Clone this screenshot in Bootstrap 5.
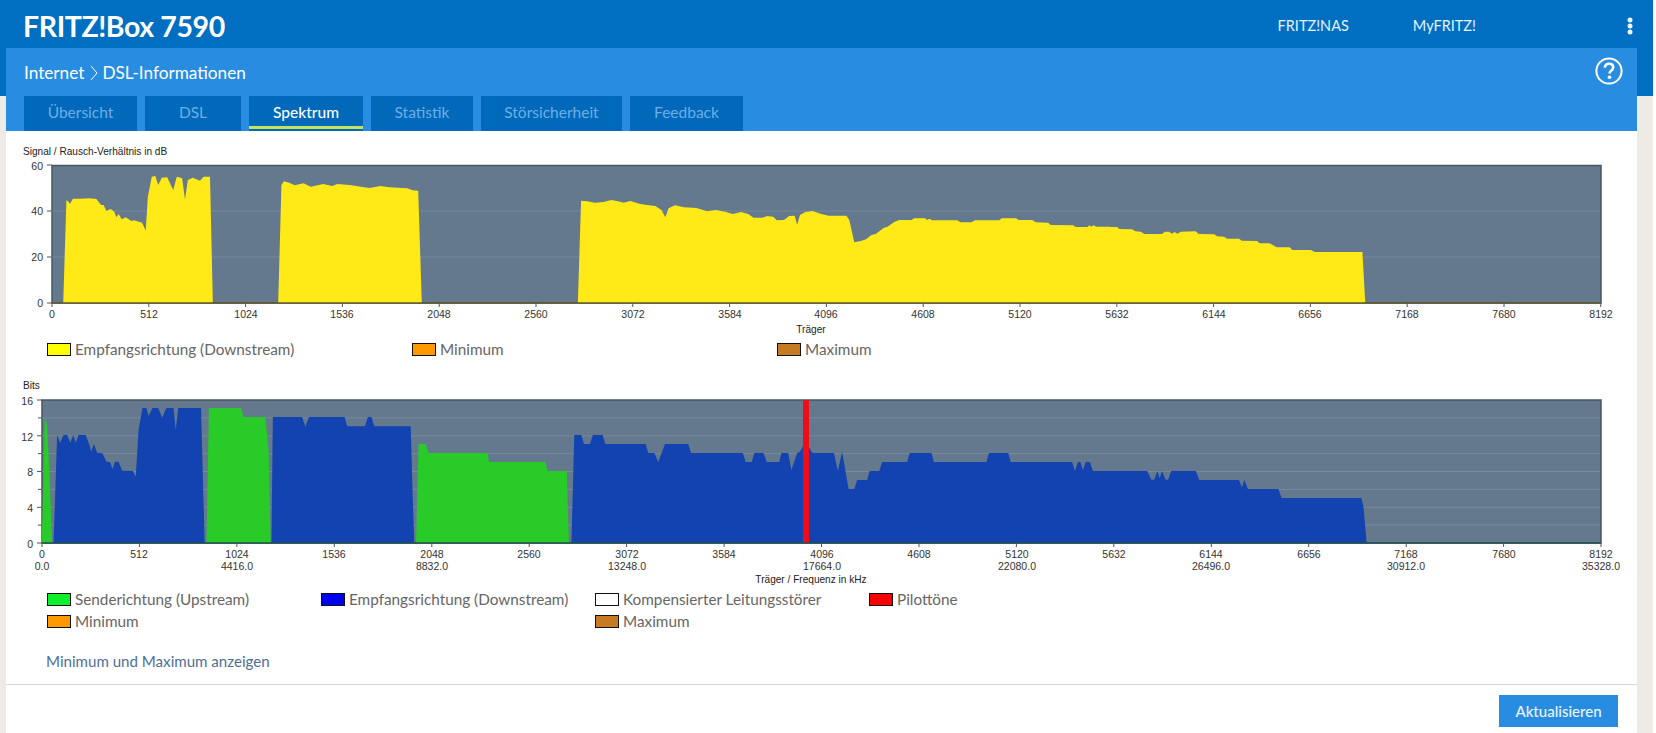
<!DOCTYPE html>
<html lang="de">
<head>
<meta charset="utf-8">
<title>FRITZ!Box 7590</title>
<link href="https://cdn.jsdelivr.net/npm/bootstrap@5.3.0/dist/css/bootstrap.min.css" rel="stylesheet">
<style>
html,body{margin:0;height:733px;overflow:hidden;background:#fff;}
body{font-family:"Lato","Liberation Sans",sans-serif;}
.fb-shell{width:1653px;height:733px;padding:0 16px 0 6px;background:linear-gradient(#006ec1 96px,#eeebe6 96px);}
.fb-top{height:48px;margin-left:-6px;margin-right:-16px;padding:4px 20px 0 23px;color:#eaf6ff;}
.fb-logo{font-size:28.5px;font-weight:700;letter-spacing:-.4px;color:#fff;line-height:1;}
.fb-toplink{font-size:14.5px;color:#e4f3ff;text-decoration:none;}
.fb-toplink-nas{margin-right:64px;}
.fb-toplink-my{margin-right:151px;}
.fb-panel{background:#fff;height:685px;}
.fb-head{background:#288ce0;height:83px;padding:0 0 0 18px;}
.fb-crumbrow{height:48px;padding-right:14px;}
.fb-crumb{font-size:17.2px;color:#fff;margin-top:2px;}
.fb-chevron{margin:0 4px 0 6px;}
.fb-help{margin-bottom:3px;}
.fb-tabs{display:grid;grid-template-columns:113px 96px 114px 102px 141px 113px;gap:8px;}
.fb-tab{height:35px;background:#0069ba;color:#6daee6;font-size:15.5px;text-align:center;line-height:33px;text-decoration:none;display:block;}
.fb-tab-on{color:#fff;box-shadow:inset 0 -2px 0 #0069ba,inset 0 -5px 0 #c6e35f;font-weight:500;}
.fb-chart{display:block;}
.fb-chart text{font-family:"Liberation Sans",sans-serif;font-size:10.5px;fill:#333;}
.fb-chart text.fb-cap{font-size:10.1px;fill:#222;}
.fb-grid{stroke:#778a9e;stroke-width:1;}
.fb-tick{stroke:#555;stroke-width:1;fill:none;}
.fb-frame{fill:#64798e;stroke:#49545f;stroke-width:1.5;}
.fb-legend{margin-left:41px;font-size:15.3px;color:#666;}
.fb-legend-a{width:1460px;height:26px;padding-top:2px;}
.fb-legend-b{width:1096px;}
.fb-item{height:22px;display:flex;align-items:center;}
.fb-swatch{width:24px;height:13px;border:1px solid #111;margin-right:4px;flex:none;}
.fb-c-yellow{background:#ffff00;}
.fb-c-min{background:#ff9900;}
.fb-c-max{background:#c67b22;}
.fb-c-green{background:#0cf02a;}
.fb-c-blue{background:#0000f0;}
.fb-c-white{background:#fff;}
.fb-c-red{background:#f80000;}
.fb-more{display:block;margin:18px 0 0 40px;height:22px;line-height:22px;font-size:15.1px;color:#4f6f97;text-decoration:none;}
.fb-foot{margin-top:12px;border-top:1px solid #d6d6d6;padding:10px 19px 0 0;}
.fb-btn{width:119px;height:32px;padding:0;border:0;border-radius:0;background:#288ce0;color:#e9f5ff;font-size:15px;font-weight:500;}
</style>
</head>
<body>
<div class="fb-shell">
  <header class="fb-top d-flex align-items-center">
    <div class="fb-logo flex-grow-1">FRITZ!Box 7590</div>
    <a class="fb-toplink fb-toplink-nas" href="#">FRITZ!NAS</a>
    <a class="fb-toplink fb-toplink-my" href="#">MyFRITZ!</a>
    <svg width="6" height="18" viewBox="0 0 6 18" aria-hidden="true"><circle cx="3" cy="3" r="2.5" fill="#eaf6ff"/><circle cx="3" cy="9" r="2.5" fill="#eaf6ff"/><circle cx="3" cy="15" r="2.5" fill="#eaf6ff"/></svg>
  </header>
  <main class="fb-panel">
    <div class="fb-head">
      <div class="fb-crumbrow d-flex align-items-center justify-content-between">
        <div class="fb-crumb d-flex align-items-center">Internet<svg class="fb-chevron" width="8" height="16" viewBox="0 0 8 16" aria-hidden="true"><path d="M1 1l6 7-6 7" fill="none" stroke="#fff" stroke-width="1"/></svg>DSL-Informationen</div>
        <svg class="fb-help" width="28" height="28" viewBox="0 0 28 28" aria-hidden="true"><circle cx="14" cy="14" r="12.6" fill="none" stroke="#fff" stroke-width="2"/><path d="M9.8 10.600c.3-2.600 2-3.900 4.300-3.900 2.500 0 4.100 1.500 4.100 3.500 0 1.700-.9 2.600-2.100 3.500-1.100.8-1.500 1.300-1.500 2.800" fill="none" stroke="#fff" stroke-width="2.600"/><circle cx="14.500" cy="20.300" r="1.800" fill="#fff"/></svg>
      </div>
      <nav class="fb-tabs">
        <a class="fb-tab" href="#">Übersicht</a>
        <a class="fb-tab" href="#">DSL</a>
        <a class="fb-tab fb-tab-on" href="#">Spektrum</a>
        <a class="fb-tab" href="#">Statistik</a>
        <a class="fb-tab" href="#">Störsicherheit</a>
        <a class="fb-tab" href="#">Feedback</a>
      </nav>
    </div>

    <svg class="fb-chart" width="1631" height="205" viewBox="6 131 1631 205" role="img" aria-label="Signal / Rausch-Verhältnis">
      <text class="fb-cap" x="23" y="155">Signal / Rausch-Verhältnis in dB</text>
      <rect class="fb-frame" x="52" y="165.500" width="1549" height="137.500"/>
      <path class="fb-grid" d="M52 211H1600M52 257H1600"/>
      <g fill="#ffe916">
        <g transform="translate(0,140) scale(.35714,.33333)">
          <polygon points="177,489 186,180 192,185 196,192 204,176 225,176 250,175 270,177 283,195 290,195 298,213 310,207 320,215 326,232 332,222 341,238 352,232 368,243 375,241 398,248 408,272 414,170 425,110 435,108 443,135 453,113 468,112 485,150 495,110 510,115 518,178 526,120 540,113 560,122 570,110 588,110 596,489"/>
          <polygon points="779,489 788,135 795,124 810,128 825,136 850,130 870,140 905,132 930,138 945,132 985,136 1010,140 1035,144 1065,138 1090,142 1140,145 1155,151 1171,152 1181,489"/>
        </g>
        <g transform="translate(550,140) scale(.35714,.33333)">
          <polygon points="78,489 87,182 105,184 125,188 150,186 172,180 190,184 207,188 225,183 250,191 270,195 295,198 312,210 323,232 332,205 350,196 375,202 410,204 440,214 465,210 490,215 512,222 535,216 555,222 570,233 595,233 608,228 625,230 635,241 655,240 670,228 685,227 692,254 700,225 715,216 735,213 760,222 780,227 830,227 838,240 852,307 870,303 885,298 900,285 912,282 935,263 945,260 965,245 978,240 1012,240 1020,235 1050,235 1056,240 1062,236 1070,241 1140,241 1150,247 1180,247 1190,241 1258,241 1265,235 1305,235 1312,240 1350,240 1360,247 1395,248 1402,255 1465,256 1472,261 1505,261 1510,256 1515,260 1522,256 1530,260 1568,260 1568,489"/>
        </g>
        <g transform="translate(1100,140) scale(.35461,.33333)">
          <polygon points="0,489 0,261 48,261 55,267 90,268 100,274 115,275 125,282 175,282 183,275 195,275 203,281 210,276 218,281 228,275 270,274 278,282 322,283 330,289 350,290 358,296 392,296 400,302 443,303 450,310 478,310 498,322 535,322 542,330 595,330 605,336 740,336 748,489"/>
        </g>
      </g>
      <path d="M52 303H1601" stroke="#5f5b2c" stroke-width="1.500"/>
      <path class="fb-tick" d="M47 165H52M47 211H52M47 257H52M47 303H52M52 303V307M148.800 303V307M245.600 303V307M342.400 303V307M439.200 303V307M536 303V307M632.800 303V307M729.600 303V307M826.400 303V307M923.200 303V307M1020 303V307M1116.800 303V307M1213.600 303V307M1310.400 303V307M1407.200 303V307M1504 303V307M1600.800 303V307"/>
      <g text-anchor="end">
        <text x="43" y="170">60</text><text x="43" y="215">40</text><text x="43" y="261">20</text><text x="43" y="307">0</text>
      </g>
      <g text-anchor="middle">
        <text x="52" y="318">0</text><text x="149" y="318">512</text><text x="246" y="318">1024</text><text x="342" y="318">1536</text><text x="439" y="318">2048</text><text x="536" y="318">2560</text><text x="633" y="318">3072</text><text x="730" y="318">3584</text><text x="826" y="318">4096</text><text x="923" y="318">4608</text><text x="1020" y="318">5120</text><text x="1117" y="318">5632</text><text x="1214" y="318">6144</text><text x="1310" y="318">6656</text><text x="1407" y="318">7168</text><text x="1504" y="318">7680</text><text x="1601" y="318">8192</text>
        <text class="fb-cap" x="811" y="333">Träger</text>
      </g>
    </svg>

    <div class="fb-legend fb-legend-a row g-0">
      <div class="col-3 fb-item"><span class="fb-swatch fb-c-yellow"></span>Empfangsrichtung (Downstream)</div>
      <div class="col-3 fb-item"><span class="fb-swatch fb-c-min"></span>Minimum</div>
      <div class="col-3 fb-item"><span class="fb-swatch fb-c-max"></span>Maximum</div>
    </div>

    <svg class="fb-chart" width="1631" height="226" viewBox="6 362 1631 226" role="img" aria-label="Bits">
      <text class="fb-cap" x="23" y="389">Bits</text>
      <rect class="fb-frame" x="42" y="400" width="1559" height="143"/>
      <path class="fb-grid" d="M42 417.900H1600M42 435.800H1600M42 453.600H1600M42 471.500H1600M42 489.400H1600M42 507.300H1600M42 525.100H1600"/>
      <g transform="translate(0,370) scale(.35714,.33333)">
        <g fill="#28cb27">
          <polygon points="117,519 125,142 132,165 138,300 146,519"/>
          <polygon points="578,519 585,114 675,114 682,141 743,141 752,240 758,519"/>
          <polygon points="1165,519 1172,222 1192,222 1200,249 1365,249 1370,276 1527,276 1533,303 1568,303 1568,519"/>
        </g>
        <g fill="#1243b0">
          <polygon points="150,519 160,195 168,218 178,195 188,195 197,218 205,195 212,218 220,195 240,195 252,230 255,245 263,222 272,248 287,250 298,275 308,276 315,297 322,275 332,275 342,302 372,303 380,320 388,180 399,114 410,114 416,138 427,114 443,114 454,143 466,114 486,114 492,180 499,114 563,114 566,240 573,519"/>
          <polygon points="760,519 764,141 846,141 855,170 865,141 965,141 972,169 1022,169 1030,141 1040,141 1048,169 1150,169 1155,360 1160,519"/>
        </g>
      </g>
      <g transform="translate(550,370) scale(.35714,.33333)">
        <polygon fill="#28cb27" points="0,519 0,303 47,303 53,519"/>
        <polygon fill="#1243b0" points="60,519 68,195 88,195 95,222 112,222 120,195 147,195 155,222 268,222 275,249 292,249 303,276 322,222 387,222 395,249 540,249 548,276 565,276 572,249 598,249 607,276 642,276 648,249 667,249 676,300 692,249 700,245 715,215 735,249 795,249 806,303 818,245 836,357 852,357 860,330 888,330 895,303 922,303 930,276 1000,276 1007,249 1068,249 1075,276 1222,276 1229,249 1283,249 1290,276 1462,276 1470,303 1478,276 1485,276 1492,300 1500,276 1512,276 1520,303 1568,303 1568,519"/>
      </g>
      <g transform="translate(1100,370) scale(.35461,.33333)">
        <polygon fill="#1243b0" points="0,519 0,303 133,303 145,329 153,329 162,303 168,325 175,303 185,329 192,329 201,303 270,303 280,330 392,330 400,352 407,330 417,357 503,357 512,384 737,384 743,410 752,519"/>
      </g>
      <rect x="803" y="400" width="6" height="143" fill="#f00d18"/>
      <path d="M42 543H1601" stroke="#21504f" stroke-width="1.500"/>
      <path class="fb-tick" d="M37 400H42M38 417.900H42M37 435.800H42M38 453.600H42M37 471.500H42M38 489.400H42M37 507.300H42M38 525.100H42M37 543H42M42 543V547M139.400 543V547M236.900 543V547M334.300 543V547M431.800 543V547M529.200 543V547M626.600 543V547M724.100 543V547M821.500 543V547M919 543V547M1016.400 543V547M1113.800 543V547M1211.300 543V547M1308.700 543V547M1406.200 543V547M1503.600 543V547M1601 543V547"/>
      <g text-anchor="end">
        <text x="33" y="405">16</text><text x="33" y="441">12</text><text x="33" y="476">8</text><text x="33" y="512">4</text><text x="33" y="548">0</text>
      </g>
      <g text-anchor="middle">
        <text x="42" y="558">0</text><text x="139" y="558">512</text><text x="237" y="558">1024</text><text x="334" y="558">1536</text><text x="432" y="558">2048</text><text x="529" y="558">2560</text><text x="627" y="558">3072</text><text x="724" y="558">3584</text><text x="822" y="558">4096</text><text x="919" y="558">4608</text><text x="1017" y="558">5120</text><text x="1114" y="558">5632</text><text x="1211" y="558">6144</text><text x="1309" y="558">6656</text><text x="1406" y="558">7168</text><text x="1504" y="558">7680</text><text x="1601" y="558">8192</text>
        <text x="42" y="570">0.0</text><text x="237" y="570">4416.0</text><text x="432" y="570">8832.0</text><text x="627" y="570">13248.0</text><text x="822" y="570">17664.0</text><text x="1017" y="570">22080.0</text><text x="1211" y="570">26496.0</text><text x="1406" y="570">30912.0</text><text x="1601" y="570">35328.0</text>
        <text class="fb-cap" x="811" y="583">Träger / Frequenz in kHz</text>
      </g>
    </svg>

    <div class="fb-legend fb-legend-b row g-0">
      <div class="col-3 fb-item"><span class="fb-swatch fb-c-green"></span>Senderichtung (Upstream)</div>
      <div class="col-3 fb-item"><span class="fb-swatch fb-c-blue"></span>Empfangsrichtung (Downstream)</div>
      <div class="col-3 fb-item"><span class="fb-swatch fb-c-white"></span>Kompensierter Leitungsstörer</div>
      <div class="col-3 fb-item"><span class="fb-swatch fb-c-red"></span>Pilottöne</div>
      <div class="col-6 fb-item"><span class="fb-swatch fb-c-min"></span>Minimum</div>
      <div class="col-6 fb-item"><span class="fb-swatch fb-c-max"></span>Maximum</div>
    </div>

    <a class="fb-more" href="#">Minimum und Maximum anzeigen</a>

    <div class="fb-foot d-flex justify-content-end">
      <button type="button" class="btn fb-btn">Aktualisieren</button>
    </div>
  </main>
</div>
<script src="https://cdn.jsdelivr.net/npm/bootstrap@5.3.0/dist/js/bootstrap.bundle.min.js"></script>
</body>
</html>
